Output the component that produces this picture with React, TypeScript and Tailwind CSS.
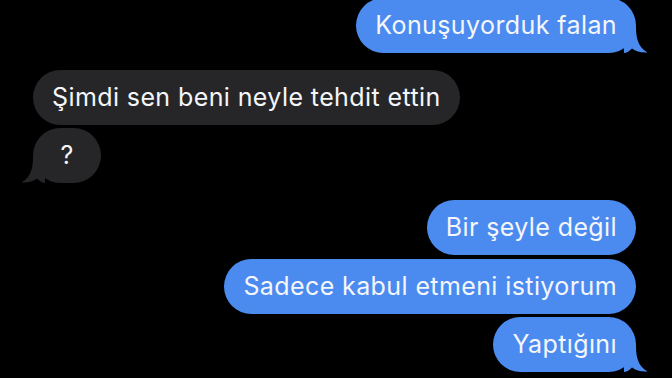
import React from "react";

type Msg = { text: string; me: boolean; tail?: boolean; mt: string };

const messages: Msg[] = [
  { text: "Konuşuyorduk falan", me: true, tail: true, mt: "-mt-[2px]" },
  { text: "Şimdi sen beni neyle tehdit ettin", me: false, mt: "mt-[17px]" },
  { text: "?", me: false, tail: true, mt: "mt-[3px]" },
  { text: "Bir şeyle değil", me: true, mt: "mt-[17px]" },
  { text: "Sadece kabul etmeni istiyorum", me: true, mt: "mt-[4px]" },
  { text: "Yaptığını", me: true, tail: true, mt: "mt-[3px]" },
];

const Tail = ({ me }: { me: boolean }) =>
  me ? (
    <svg
      className="absolute bottom-0 -right-[12px]"
      width="24"
      height="26"
      viewBox="0 0 24 26"
    >
      <path
        d="M0 0 H12 C12 11 14 20 23.5 25.5 C17 26 12 24.5 8 21.5 C5 24.5 2 26 0 26 Z"
        fill="#4b8bf0"
      />
    </svg>
  ) : (
    <svg
      className="absolute bottom-0 -left-[12px]"
      width="24"
      height="26"
      viewBox="0 0 24 26"
    >
      <path
        d="M24 0 H12 C12 11 10 20 0.5 25.5 C7 26 12 24.5 16 21.5 C19 24.5 22 26 24 26 Z"
        fill="#262628"
      />
    </svg>
  );

const Bubble = ({ msg }: { msg: Msg }) => (
  <div className={`flex ${msg.me ? "justify-end" : "justify-start"} ${msg.mt}`}>
    <div
      className={`relative h-[55px] min-w-[68px] rounded-full flex items-center justify-center px-[19px] text-[25px] tracking-[0.4px] text-[#f4f6fa] ${
        msg.me ? "bg-[#4b8bf0]" : "bg-[#262628]"
      }`}
    >
      {msg.tail && <Tail me={msg.me} />}
      <span className="relative whitespace-nowrap">{msg.text}</span>
    </div>
  </div>
);

export default function App() {
  return (
    <div
      className="w-[672px] h-[378px] overflow-hidden bg-black pl-[33px] pr-[36px]"
      style={{ fontFamily: "Inter, 'Liberation Sans', sans-serif" }}
    >
      {messages.map((m, i) => (
        <Bubble key={i} msg={m} />
      ))}
    </div>
  );
}
